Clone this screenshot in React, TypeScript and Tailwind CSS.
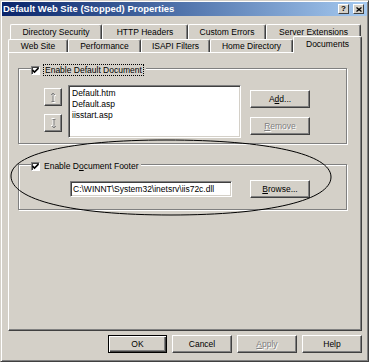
import React from "react";

const font = { fontFamily: '"Liberation Sans", Arial, sans-serif' };

function Btn({
  children,
  w,
  def = false,
  disabled = false,
}: {
  children: React.ReactNode;
  w: string;
  def?: boolean;
  disabled?: boolean;
}) {
  return (
    <div
      className={`${w} h-[18px] flex items-center justify-center bg-[#d4d0c8] text-[8.5px] leading-none ${
        def
          ? "border border-black shadow-[inset_1px_1px_0_#fff,inset_-1px_-1px_0_#404040,inset_-2px_-2px_0_#808080]"
          : "border border-t-white border-l-white border-r-[#404040] border-b-[#404040] shadow-[inset_-1px_-1px_0_#808080]"
      } ${disabled ? "text-[#808080] [text-shadow:1px_1px_0_#fff]" : "text-black"}`}
    >
      {children}
    </div>
  );
}

function Check() {
  return (
    <div className="w-[9px] h-[9px] bg-white border border-t-[#808080] border-l-[#808080] border-r-white border-b-white shadow-[inset_1px_1px_0_#404040] flex items-center justify-center shrink-0">
      <svg width="7" height="7" viewBox="0 0 7 7">
        <path d="M0.5 3 L2.5 5 L6.5 1" stroke="#000" strokeWidth="1.6" fill="none" />
      </svg>
    </div>
  );
}

function ArrowBtn({ up }: { up: boolean }) {
  return (
    <div className="w-[18px] h-[18px] bg-[#d4d0c8] border border-t-white border-l-white border-r-[#404040] border-b-[#404040] shadow-[inset_-1px_-1px_0_#808080] flex items-center justify-center">
      <svg width="9" height="11" viewBox="0 0 9 11" className={up ? "" : "rotate-180"}>
        <g transform="translate(1 1)" stroke="#fff" fill="none" strokeWidth="1">
          <path d="M4 1 V9 M2 3 L4 1 L6 3 M2.5 9.5 H5.5" />
        </g>
        <g stroke="#808080" fill="none" strokeWidth="1">
          <path d="M4 1 V9 M2 3 L4 1 L6 3 M2.5 9.5 H5.5" />
        </g>
      </svg>
    </div>
  );
}

function BackTab({ label, w }: { label: string; w: string }) {
  return (
    <div
      className={`${w} h-[15px] flex items-center justify-center rounded-t-[2px] border-l border-t border-white border-r border-r-[#404040] shadow-[inset_-1px_0_0_#808080] text-[8.5px] leading-none`}
    >
      {label}
    </div>
  );
}

function FrontTab({ label, w }: { label: string; w: string }) {
  return (
    <div
      className={`${w} h-[13px] flex items-center justify-center rounded-t-[2px] border-l border-t border-white border-r border-r-[#404040] shadow-[inset_-1px_0_0_#808080] text-[8.5px] leading-none bg-[#d4d0c8]`}
    >
      {label}
    </div>
  );
}

export default function App() {
  return (
    <div
      className="relative w-[369px] h-[362px] bg-[#d4d0c8] border border-t-[#d4d0c8] border-l-[#d4d0c8] border-r-[#404040] border-b-[#404040] shadow-[inset_1px_1px_0_#fff,inset_-1px_-1px_0_#808080] p-[1px] text-black overflow-hidden"
      style={font}
    >
      {/* title bar */}
      <div className="h-[14px] flex items-center justify-between pl-[1px] pr-[3px] bg-gradient-to-r from-[#0a246a] to-[#a6caf0]">
        <span className="text-white font-bold text-[9.5px] leading-none">
          Default Web Site (Stopped) Properties
        </span>
        <div className="flex gap-[4px]">
          <div className="w-[11px] h-[10px] bg-[#d4d0c8] border border-t-white border-l-white border-r-[#404040] border-b-[#404040] flex items-center justify-center text-[8px] font-bold leading-none">
            ?
          </div>
          <div className="w-[11px] h-[10px] bg-[#d4d0c8] border border-t-white border-l-white border-r-[#404040] border-b-[#404040] flex items-center justify-center">
            <svg width="6" height="5" viewBox="0 0 6 5">
              <path d="M0.5 0.5 L5.5 4.5 M5.5 0.5 L0.5 4.5" stroke="#000" strokeWidth="1.3" />
            </svg>
          </div>
        </div>
      </div>

      {/* tabs */}
      <div className="mt-[8px] ml-[8px] flex">
        <BackTab label="Directory Security" w="w-[92px]" />
        <BackTab label="HTTP Headers" w="w-[86px]" />
        <BackTab label="Custom Errors" w="w-[78px]" />
        <BackTab label="Server Extensions" w="w-[95px]" />
      </div>
      <div className="ml-[6px] flex items-end h-[13px]">
        <FrontTab label="Web Site" w="w-[60px]" />
        <FrontTab label="Performance" w="w-[73px]" />
        <FrontTab label="ISAPI Filters" w="w-[69px]" />
        <FrontTab label="Home Directory" w="w-[83px]" />
        <div className="relative z-10 w-[69px] h-[17px] -mb-[1px] pb-[2px] flex items-center justify-center rounded-t-[2px] border-l border-t border-white border-r border-r-[#404040] shadow-[inset_-1px_0_0_#808080] text-[8.5px] leading-none bg-[#d4d0c8]">
          Documents
        </div>
      </div>

      {/* panel */}
      <div className="ml-[6px] w-[354px] h-[279px] border border-t-white border-l-white border-r-[#404040] border-b-[#404040] shadow-[inset_-1px_-1px_0_#808080] pl-[9px] pt-[15px]">
        {/* group 1 */}
        <div className="relative w-[329px] h-[76px] border border-[#808080] shadow-[inset_1px_1px_0_#fff,1px_1px_0_#fff] flex items-start pl-[25px] pt-[16px]">
          <div className="absolute left-[12px] -top-[5px] flex items-center bg-[#d4d0c8] pr-[2px]">
            <Check />
            <span className="ml-[3px] border border-dotted border-black px-[1px] h-[12px] flex items-center text-[8.5px] leading-none">
              Enable Default Document
            </span>
          </div>
          <div className="mt-[3px] flex flex-col gap-[8px]">
            <ArrowBtn up />
            <ArrowBtn up={false} />
          </div>
          <div className="ml-[6px] w-[173px] h-[53px] bg-white border border-t-[#808080] border-l-[#808080] border-r-white border-b-white shadow-[inset_1px_1px_0_#404040,inset_-1px_-1px_0_#d4d0c8] pl-[3px] pt-[2px] text-[8.5px] leading-[11px]">
            <div>Default.htm</div>
            <div>Default.asp</div>
            <div>iisstart.asp</div>
          </div>
          <div className="ml-[9px] mt-[5px] flex flex-col gap-[9px]">
            <Btn w="w-[60px]">
              A<span className="underline">d</span>d...
            </Btn>
            <Btn w="w-[60px]" disabled>
              <span className="underline">R</span>emove
            </Btn>
          </div>
        </div>

        {/* group 2 */}
        <div className="relative mt-[20px] w-[329px] h-[46px] border border-[#808080] shadow-[inset_1px_1px_0_#fff,1px_1px_0_#fff] flex items-start pl-[51px] pt-[15px]">
          <div className="absolute left-[12px] -top-[5px] flex items-center bg-[#d4d0c8] pr-[2px]">
            <Check />
            <span className="ml-[4px] h-[12px] flex items-center text-[8.5px] leading-none">
              Enable D<span className="underline">o</span>cument Footer
            </span>
          </div>
          <div className="mt-[1px] w-[162px] h-[16px] bg-white border border-t-[#808080] border-l-[#808080] border-r-white border-b-white shadow-[inset_1px_1px_0_#404040,inset_-1px_-1px_0_#d4d0c8] pl-[2px] flex items-center text-[8.5px] leading-none">
            C:\WINNT\System32\inetsrv\iis72c.dll
          </div>
          <div className="ml-[18px]">
            <Btn w="w-[60px]">
              <span className="underline">B</span>rowse...
            </Btn>
          </div>
        </div>
      </div>

      {/* bottom buttons */}
      <div className="mt-[4px] mr-[5px] flex justify-end gap-[5px]">
        <Btn w="w-[59px]" def>
          OK
        </Btn>
        <Btn w="w-[60px]">Cancel</Btn>
        <Btn w="w-[60px]" disabled>
          <span className="underline">A</span>pply
        </Btn>
        <Btn w="w-[60px]">Help</Btn>
      </div>

      {/* hand-drawn ellipse annotation */}
      <svg
        className="absolute left-0 top-0 pointer-events-none"
        width="369"
        height="362"
        viewBox="0 0 369 362"
      >
        <path
          d="M10,175 C10,153 69,139 165,139 C267,139 330,153 330,176 C330,199 269,214 170,214 C71,214 10,199 10,175 Z"
          stroke="#000"
          strokeWidth="1"
          fill="none"
        />
      </svg>
    </div>
  );
}
